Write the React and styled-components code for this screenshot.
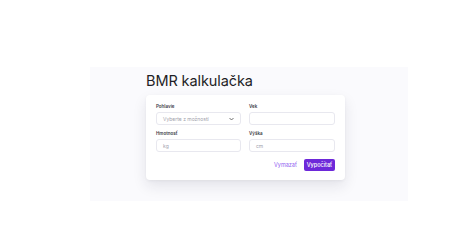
import styled, { createGlobalStyle } from "styled-components";

const Global = createGlobalStyle`
  html, body {
    margin: 0;
    padding: 0;
    background: #ffffff;
    font-family: Inter, "Noto Sans", sans-serif;
  }
`;

const Page = styled.div`
  padding: 67px 0 0 90px;
`;

const Panel = styled.section`
  width: 318px;
  height: 134px;
  box-sizing: border-box;
  padding: 6px 56px 0;
  background: #fafafd;
`;

const Title = styled.h1`
  margin: 0 0 6px;
  font-size: 14.5px;
  line-height: 16px;
  font-weight: 400;
  color: #1f1f26;
  letter-spacing: -0.1px;
`;

const Card = styled.div`
  width: 199px;
  box-sizing: border-box;
  padding: 9px 10px 9px;
  background: #fff;
  border-radius: 4px;
  box-shadow: 0 6px 14px rgba(30, 30, 60, 0.1), 0 1px 3px rgba(30, 30, 60, 0.05);
`;

const Grid = styled.div`
  display: grid;
  grid-template-columns: 85px 86px;
  column-gap: 8px;
  row-gap: 6px;
`;

const Field = styled.label`
  display: flex;
  flex-direction: column;
  gap: 2px;
`;

const Label = styled.span`
  font-size: 4.5px;
  line-height: 6px;
  font-weight: 600;
  color: #3a3a44;
`;

const Box = styled.div`
  height: 13px;
  box-sizing: border-box;
  border: 0.6px solid #e8e8ef;
  border-radius: 3px;
  display: flex;
  align-items: center;
  justify-content: space-between;
  padding: 0 6px;
  font-size: 5px;
  color: #a0a0ab;
`;

const Actions = styled.div`
  display: flex;
  justify-content: flex-end;
  align-items: center;
  gap: 7px;
  margin-top: 7px;
`;

const Ghost = styled.button`
  border: none;
  background: transparent;
  padding: 0;
  font-family: inherit;
  font-size: 5.5px;
  color: #9061f0;
`;

const Primary = styled.button`
  border: none;
  background: #6d28d9;
  color: #fff;
  font-family: inherit;
  font-size: 5.5px;
  font-weight: 500;
  height: 12px;
  width: 31px;
  padding: 0;
  border-radius: 2px;
`;

const Chevron = () => (
  <svg width="5" height="4" viewBox="0 0 10 6">
    <path d="M1 1l4 4 4-4" fill="none" stroke="#444" strokeWidth="1.5" />
  </svg>
);

const App = () => (
  <Page>
    <Global />
    <Panel>
      <Title>BMR kalkulačka</Title>
      <Card>
        <Grid>
          <Field>
            <Label>Pohlavie</Label>
            <Box>
              Vyberte z možností
              <Chevron />
            </Box>
          </Field>
          <Field>
            <Label>Vek</Label>
            <Box />
          </Field>
          <Field>
            <Label>Hmotnosť</Label>
            <Box>kg</Box>
          </Field>
          <Field>
            <Label>Výška</Label>
            <Box>cm</Box>
          </Field>
        </Grid>
        <Actions>
          <Ghost>Vymazať</Ghost>
          <Primary>Vypočítať</Primary>
        </Actions>
      </Card>
    </Panel>
  </Page>
);

export default App;
